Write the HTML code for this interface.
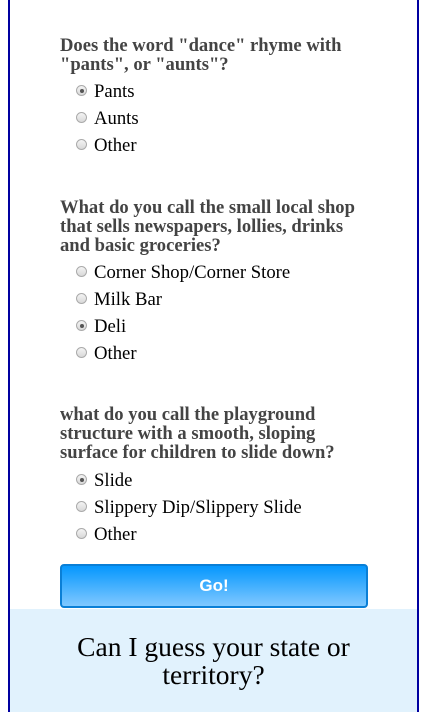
<!DOCTYPE html>
<html><head><meta charset="utf-8"><style>
*{margin:0;padding:0;box-sizing:border-box}
body{width:422px;height:712px;background:#fff;position:relative;overflow:hidden;font-family:"Liberation Serif",serif}
.bl{position:absolute;top:0;bottom:0;width:2px;background:#0000a0}
.q{position:absolute;left:60px;font-weight:bold;color:#444;font-size:18.6px;line-height:19px;white-space:nowrap}
.o{position:absolute;left:76px;font-size:18.7px;color:#000;white-space:nowrap;line-height:20px}
.r{display:inline-block;width:11px;height:11px;border-radius:50%;border:1px solid #aaa;background:linear-gradient(#f4f4f4,#d8d8d8);vertical-align:middle;margin-right:7px;position:relative;top:-2px}
.r.c::after{content:"";position:absolute;left:2.5px;top:2.5px;width:4px;height:4px;border-radius:50%;background:#555}
.btn{position:absolute;left:60px;top:564px;width:308px;height:44px;border:2px solid #0a7fd6;border-radius:4px;background:linear-gradient(#0597fe,#80c8ff);color:#fff;font:bold 17px "Liberation Sans",sans-serif;text-align:center;line-height:40px}
.panel{position:absolute;left:10px;top:609px;width:407px;height:103px;background:#e1f2fd;text-align:center;font-size:27.5px;line-height:28px;padding-top:24px;color:#000}
</style></head><body>
<div class="bl" style="left:8px"></div><div class="bl" style="left:417px"></div>
<div class="q" style="top:36px">Does the word "dance" rhyme with<br>"pants", or "aunts"?</div>
<div class="o" style="top:82px"><span class="r c"></span>Pants</div>
<div class="o" style="top:109px"><span class="r"></span>Aunts</div>
<div class="o" style="top:136px"><span class="r"></span>Other</div>
<div class="q" style="top:198px">What do you call the small local shop<br>that sells newspapers, lollies, drinks<br>and basic groceries?</div>
<div class="o" style="top:263px"><span class="r"></span>Corner Shop/Corner Store</div>
<div class="o" style="top:290px"><span class="r"></span>Milk Bar</div>
<div class="o" style="top:317px"><span class="r c"></span>Deli</div>
<div class="o" style="top:344px"><span class="r"></span>Other</div>
<div class="q" style="top:405px">what do you call the playground<br>structure with a smooth, sloping<br>surface for children to slide down?</div>
<div class="o" style="top:471px"><span class="r c"></span>Slide</div>
<div class="o" style="top:498px"><span class="r"></span>Slippery Dip/Slippery Slide</div>
<div class="o" style="top:525px"><span class="r"></span>Other</div>
<div class="btn">Go!</div>
<div class="panel">Can I guess your state or<br>territory?</div>
</body></html>
